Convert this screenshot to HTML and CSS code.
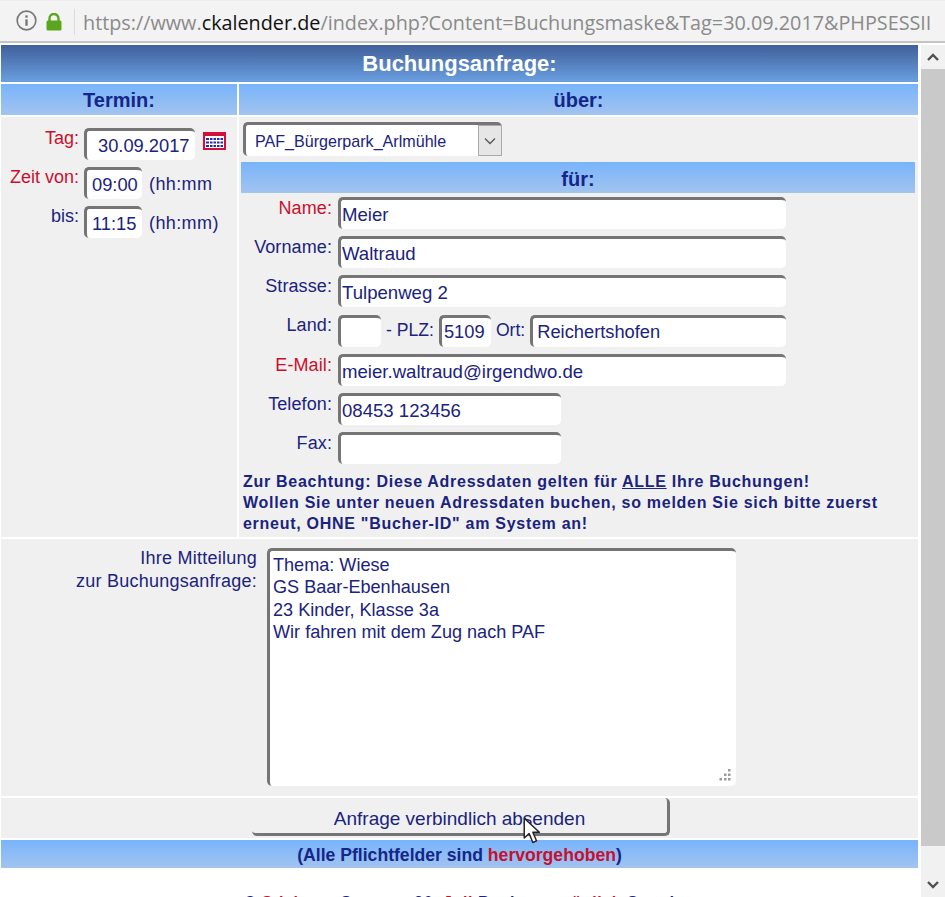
FILE: index.html
```html
<!DOCTYPE html>
<html lang="de">
<head>
<meta charset="utf-8">
<title>Buchungsanfrage</title>
<link rel="stylesheet" href="styles.css">
</head>
<body>
<div class="urlbar">
  <svg class="ico-info" width="21" height="21" viewBox="0 0 18 18"><circle cx="9" cy="9" r="8" fill="none" stroke="#777" stroke-width="1.400"/><rect x="8" y="8" width="2" height="5.500" fill="#777"/><rect x="8" y="4.600" width="2" height="2" fill="#777"/></svg>
  <svg class="ico-lock" width="16" height="18" viewBox="0 0 16 18"><path d="M3.500 8V5.500a4.500 4.500 0 0 1 9 0V8" fill="none" stroke="#5ba51f" stroke-width="2.400"/><rect x="0.500" y="7.500" width="15" height="10" rx="1.500" fill="#5ba51f"/></svg>
  <span class="sep"></span>
  <div class="url">https://www.<b>ckalender.de</b>/index.php?Content=Buchungsmaske&amp;Tag=30.09.2017&amp;PHPSESSII</div>
</div>
<div class="viewport">
  <main class="page">
    <h1 class="title">Buchungsanfrage:</h1>
    <div class="cols">
      <div class="left">
        <div class="band">Termin:</div>
        <div class="panel time">
          <div class="trow"><label class="req">Tag:</label><input class="inp date" value="30.09.2017">
            <svg class="cal" width="23" height="18" viewBox="0 0 23 18"><rect x="1" y="1" width="21" height="16" fill="#fff" stroke="#d0103a" stroke-width="2"/><rect x="1" y="1" width="21" height="3" fill="#d0103a"/><g fill="#2a2aa8"><rect x="3" y="6" width="17" height="2"/><rect x="3" y="9.500" width="17" height="2"/><rect x="3" y="13" width="17" height="2"/></g><g fill="#fff"><rect x="6" y="5" width="1" height="11"/><rect x="9.500" y="5" width="1" height="11"/><rect x="13" y="5" width="1" height="11"/><rect x="16.500" y="5" width="1" height="11"/></g></svg>
          </div>
          <div class="trow"><label class="req">Zeit von:</label><input class="inp hhmm" value="09:00"><span class="unit">(hh:mm</span></div>
          <div class="trow"><label>bis:</label><input class="inp hhmm" value="11:15"><span class="unit">(hh:mm)</span></div>
        </div>
      </div>
      <div class="right">
        <div class="band">über:</div>
        <div class="panel detail">
          <div class="select"><span class="sel-text">PAF_Bürgerpark_Arlmühle</span><span class="sel-btn"><svg width="12" height="8" viewBox="0 0 12 8"><path d="M1 1.500l5 5 5-5" fill="none" stroke="#555" stroke-width="1.300"/></svg></span></div>
          <div class="band sub">für:</div>
          <div class="form">
            <label class="req">Name:</label><input class="inp wide" value="Meier">
            <label>Vorname:</label><input class="inp wide" value="Waltraud">
            <label>Strasse:</label><input class="inp wide" value="Tulpenweg 2">
            <label>Land:</label>
            <div class="addr"><input class="inp land" value=""><span>- PLZ:</span><input class="inp plz" value="5109"><span>Ort:</span><input class="inp ort" value="Reichertshofen"></div>
            <label class="req">E-Mail:</label><input class="inp wide" value="meier.waltraud@irgendwo.de">
            <label>Telefon:</label><input class="inp mid" value="08453 123456">
            <label>Fax:</label><input class="inp mid" value="">
          </div>
          <p class="note">Zur Beachtung: Diese Adressdaten gelten für <u>ALLE</u> Ihre Buchungen!<br>Wollen Sie unter neuen Adressdaten buchen, so melden Sie sich bitte zuerst<br>erneut, OHNE "Bucher-ID" am System an!</p>
        </div>
      </div>
    </div>
    <div class="panel message">
      <label class="msg-label">Ihre Mitteilung<br>zur Buchungsanfrage:</label>
      <div class="area-wrap">
        <textarea class="inp area">Thema: Wiese
GS Baar-Ebenhausen
23 Kinder, Klasse 3a
Wir fahren mit dem Zug nach PAF</textarea>
        <svg class="grip" width="12" height="12" viewBox="0 0 12 12"><g fill="#9a9a9a"><rect x="9" y="0" width="2.500" height="2.500"/><rect x="5" y="4.500" width="2.500" height="2.500"/><rect x="9" y="4.500" width="2.500" height="2.500"/><rect x="0.500" y="9" width="2.500" height="2.500"/><rect x="5" y="9" width="2.500" height="2.500"/><rect x="9" y="9" width="2.500" height="2.500"/></g></svg>
      </div>
    </div>
    <div class="panel send"><button class="btn" type="button">Anfrage verbindlich absenden</button>
      <svg class="cursor" width="18" height="28" viewBox="0 0 22 34"><path d="M1.500 1.500v24l6-5.500 4.500 11 4.500-2-4.500-10.500h8z" fill="#fff" stroke="#222" stroke-width="1.800" stroke-linejoin="round"/></svg>
    </div>
    <div class="band foot">(Alle Pflichtfelder sind <span class="red">hervorgehoben</span>)</div>
    <div class="cut"><span class="blue">©</span> <span class="red">Stichtag:</span> <span class="blue">Sonntag 26.</span> <span class="red">Juli</span> <span class="blue">Buchung</span> <span class="red">möglich</span> <span class="blue">Stand</span></div>
  </main>
  <aside class="scroll">
    <svg class="arrow" width="12" height="8" viewBox="0 0 12 8"><path d="M1 7l5-5 5 5" fill="none" stroke="#505050" stroke-width="2.400"/></svg>
    <div class="thumb"></div>
    <svg class="arrow" width="12" height="8" viewBox="0 0 12 8"><path d="M1 1l5 5 5-5" fill="none" stroke="#505050" stroke-width="2.400"/></svg>
  </aside>
</div>
</body>
</html>
```
FILE: styles.css
```css
* { box-sizing: border-box; }
html, body { margin: 0; height: 100%; overflow: hidden; background: #fff; }
body { font-family: "Liberation Sans", Arial, sans-serif; color: #1a237e; font-size: 18px; width: 945px; height: 897px; }
.urlbar { height: 43px; display: flex; align-items: center; background: #f3f3f3; border-bottom: 2px solid #c4c4c4; border-top: 1px solid #ececec; padding-left: 16px; }
.ico-info { margin-top: -1px; }
.ico-lock { margin-left: 9px; margin-top: 1px; }
.sep { width: 1px; height: 26px; background: #dcdcdc; margin-left: 12px; margin-right: 8px; margin-top: 2px; }
.url { font-family: "Open Sans", sans-serif; font-size: 19.800px; color: #8a8a8a; white-space: nowrap; overflow: hidden; width: 855px; margin-top: 3px; }
.url b { font-weight: 400; color: #111; }
.viewport { display: flex; height: 854px; padding-top: 2px; }
.page { width: 918px; padding-left: 1px; overflow: hidden; flex: none; }
.title { margin: 0; height: 37px; line-height: 38px; text-align: center; color: #fff; font-size: 22px; font-weight: 700; background: linear-gradient(#40609a, #6a9fe0); }
.cols { display: grid; grid-template-columns: 236px 1fr; column-gap: 2px; margin-top: 2px; }
.band { height: 31px; line-height: 33px; text-align: center; font-weight: 700; font-size: 20px; color: #14268a; background: linear-gradient(#78b4fb, #a2c4ef); }
.panel { background: #f0f0f0; }
.left .panel, .right .panel { margin-top: 2px; height: 420px; }
.time { padding-top: 11px; }
.trow { display: flex; align-items: flex-start; height: 39px; }
.trow label { width: 78px; text-align: right; margin-right: 5px; line-height: 21px; white-space: nowrap; }
.req { color: #c8102e; }
.inp { font: 18.300px "Liberation Sans", Arial, sans-serif; color: #1a237e; background: #fff; border: 0; border-top: 3px solid #757575; border-left: 3px solid #757575; border-radius: 5px; outline: none; padding: 0 0 0 1px; height: 32px; display: block; }
.date { width: 111px; padding-left: 11px; }
.hhmm { width: 58px; padding-left: 5px; }
.cal { margin: 4px 0 0 8px; flex: none; }
.unit { margin-left: 7px; line-height: 34px; white-space: nowrap; letter-spacing: 0.400px; }
.detail { padding: 5px 3px 0 2px; }
.select { width: 259px; height: 34px; display: flex; margin-left: 2px; border-top: 3px solid #757575; border-left: 3px solid #757575; border-radius: 5px; background: #fff; font-size: 16.100px; color: #1a237e; }
.sel-text { flex: 1; line-height: 32px; padding-left: 9px; white-space: nowrap; }
.sel-btn { width: 24px; background: #e6e6e6; border: 1px solid #aaa; display: flex; align-items: center; justify-content: center; }
.band.sub { margin-top: 6px; line-height: 34px; }
.form { display: grid; grid-template-columns: 91px auto; justify-content: start; column-gap: 6px; row-gap: 7px; margin-top: 4px; }
.form label { text-align: right; line-height: 22px; white-space: nowrap; letter-spacing: 0.100px; }
.wide, .mid { font-size: 18.600px; }
.wide { width: 448px; }
.mid { width: 223px; }
.addr { display: flex; align-items: center; gap: 5px; width: 448px; }
.land { width: 43px; }
.plz { width: 52px; padding-left: 2px; }
.ort { width: 256px; padding-left: 4px; margin-left: auto; }
.addr span { line-height: 33px; white-space: nowrap; font-size: 17.600px; }
.note { margin: 7px 0 0 2px; font-size: 16px; letter-spacing: 0.720px; font-weight: 700; line-height: 21px; white-space: nowrap; }
.message { margin-top: 2px; height: 257px; display: flex; align-items: flex-start; padding-top: 8px; }
.msg-label { width: 256px; text-align: right; line-height: 23px; letter-spacing: 0.250px; white-space: nowrap; }
.area-wrap { position: relative; width: 469px; height: 238px; margin: 1px 0 0 10px; }
.area { width: 100%; height: 100%; resize: none; padding: 3px 3px; line-height: 22.300px; font-size: 18.100px; }
.grip { position: absolute; right: 5px; bottom: 5px; }
.send { margin-top: 2px; height: 40px; display: flex; justify-content: center; position: relative; }
.btn { width: 418px; height: 38px; margin-left: 3px; background: #f0f0f0; border: 0; border-right: 3px solid #757575; border-bottom: 3px solid #757575; border-radius: 5px; font: 19px "Liberation Sans", Arial, sans-serif; color: #1a237e; padding: 7px 0 0; }
.cursor { position: absolute; left: 522px; top: 19px; }
.band.foot { margin-top: 2px; height: 28px; line-height: 30px; font-size: 17.600px; }
.red { color: #c8102e; }
.blue { color: #1a237e; }
.cut { margin-top: 26px; text-align: center; font-weight: 700; font-size: 16px; letter-spacing: 0.600px; line-height: 18px; white-space: nowrap; }
.scroll { width: 24px; flex: none; background: #f1f1f1; display: flex; flex-direction: column; align-items: center; margin-left: 3px; }
.arrow { margin: 8px 0; flex: none; }
.thumb { width: 24px; flex: 1; background: #c9c9c9; margin-bottom: 27px; }
```
